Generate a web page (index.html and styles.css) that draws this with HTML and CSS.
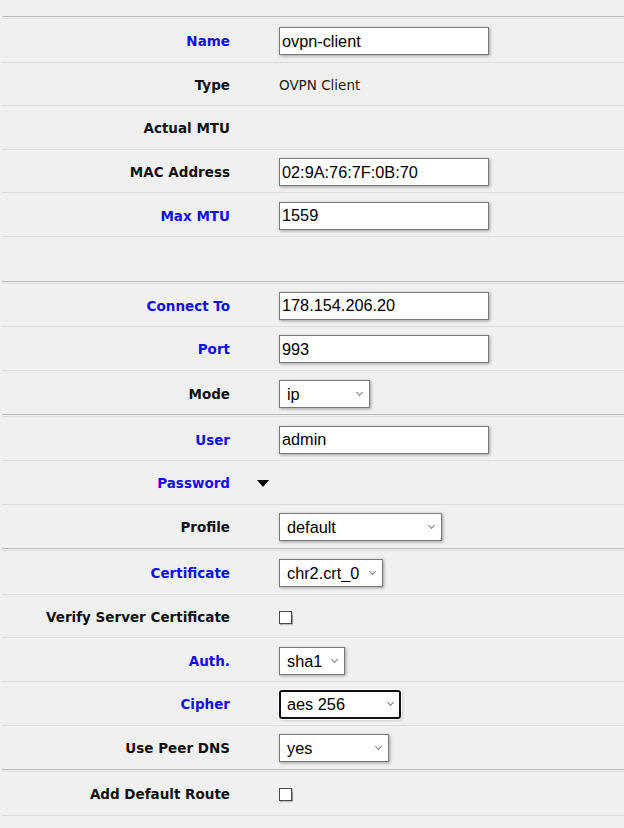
FILE: index.html
```html
<!DOCTYPE html>
<html>
<head>
<meta charset="utf-8">
<title>OVPN Client</title>
<link rel="stylesheet" href="styles.css">
</head>
<body>
<div class="page">
  <div class="sep"></div>
  <section class="section">
    <div class="row"><label class="lbl blue">Name</label><div class="val"><input class="txt" type="text" value="ovpn-client"></div></div>
    <div class="row"><label class="lbl">Type</label><div class="val plain">OVPN Client</div></div>
    <div class="row"><label class="lbl">Actual MTU</label><div class="val"></div></div>
    <div class="row"><label class="lbl">MAC Address</label><div class="val"><input class="txt" type="text" value="02:9A:76:7F:0B:70"></div></div>
    <div class="row"><label class="lbl blue">Max MTU</label><div class="val"><input class="txt" type="text" value="1559"></div></div>
    <div class="row"></div>
  </section>
  <div class="sep"></div>
  <section class="section">
    <div class="row"><label class="lbl blue">Connect To</label><div class="val"><input class="txt" type="text" value="178.154.206.20"></div></div>
    <div class="row"><label class="lbl blue">Port</label><div class="val"><input class="txt" type="text" value="993"></div></div>
    <div class="row"><label class="lbl">Mode</label><div class="val"><span class="sel w-mode"><select><option>ip</option></select></span></div></div>
  </section>
  <div class="sep"></div>
  <section class="section">
    <div class="row"><label class="lbl blue">User</label><div class="val"><input class="txt" type="text" value="admin"></div></div>
    <div class="row"><label class="lbl blue">Password</label><span class="toggle"></span></div>
    <div class="row"><label class="lbl">Profile</label><div class="val"><span class="sel w-profile"><select><option>default</option></select></span></div></div>
  </section>
  <div class="sep"></div>
  <section class="section">
    <div class="row"><label class="lbl blue">Certificate</label><div class="val"><span class="sel w-cert"><select><option>chr2.crt_0</option></select></span></div></div>
    <div class="row"><label class="lbl">Verify Server Certificate</label><div class="val"><span class="chk"></span></div></div>
    <div class="row"><label class="lbl blue">Auth.</label><div class="val"><span class="sel w-auth"><select><option>sha1</option></select></span></div></div>
    <div class="row"><label class="lbl blue">Cipher</label><div class="val"><span class="sel w-cipher focus"><select><option>aes 256</option></select></span></div></div>
    <div class="row"><label class="lbl">Use Peer DNS</label><div class="val"><span class="sel w-dns"><select><option>yes</option></select></span></div></div>
  </section>
  <div class="sep"></div>
  <section class="section open">
    <div class="row"><label class="lbl">Add Default Route</label><div class="val"><span class="chk"></span></div></div>
  </section>
</div>
</body>
</html>
```

FILE: styles.css
```css
html, body {
  margin: 0;
  padding: 0;
  background: #f0f0f0;
}

.page {
  padding: 16px 0 0 2px;
  font-family: "DejaVu Sans", Verdana, sans-serif;
  color: #111;
}

.sep {
  height: 1px;
  border-top: 1px solid #b9b9b9;
  border-bottom: 1px solid #dedede;
}

.row {
  display: grid;
  grid-template-columns: 228px 49px 1fr;
  align-items: center;
  height: 43.6px;
  padding-top: 2px;
  box-sizing: border-box;
  border-bottom: 1px solid #dcdcdc;
}

.section .row:last-child {
  border-bottom: none;
}

.section.open .row:last-child {
  border-bottom: 1px solid #dcdcdc;
}

.lbl {
  grid-column: 1;
  text-align: right;
  font-weight: bold;
  font-size: 13.5px;
  color: #111;
  white-space: nowrap;
}

.lbl.blue {
  color: #0f0fe8;
}

.val {
  grid-column: 3;
  display: flex;
  align-items: center;
}

.val.plain {
  font-size: 13.5px;
  color: #1a1a1a;
}

.txt {
  box-sizing: border-box;
  width: 210px;
  height: 28px;
  margin: 0;
  padding: 0 2px;
  border: 1px solid #7a7a7a;
  background: #fff;
  font-family: "Liberation Sans", Arial, sans-serif;
  font-size: 16.3px;
  color: #000;
  box-shadow: 1px 1px 3px rgba(0, 0, 0, 0.35);
  outline: none;
}

.sel {
  position: relative;
  display: inline-block;
  height: 28px;
}

.sel select {
  -webkit-appearance: none;
  appearance: none;
  box-sizing: border-box;
  width: 100%;
  height: 28px;
  margin: 0;
  padding: 0 20px 0 7px;
  border: 1px solid #7a7a7a;
  border-radius: 0;
  background: #fff;
  font-family: "Liberation Sans", Arial, sans-serif;
  font-size: 16.3px;
  color: #000;
  box-shadow: 1px 1px 3px rgba(0, 0, 0, 0.35);
  outline: none;
}

.sel::after {
  content: "";
  position: absolute;
  right: 8px;
  top: 10px;
  width: 4px;
  height: 4px;
  border-right: 1.4px solid #7c7c7c;
  border-bottom: 1.4px solid #7c7c7c;
  transform: rotate(45deg);
  pointer-events: none;
}

.sel.focus {
  height: 29px;
}

.sel.focus select {
  height: 29px;
  border: 2px solid #111;
  border-radius: 3px;
  padding-left: 6px;
  box-shadow: 0 0 0 1px #fff, 1px 1px 3px rgba(0, 0, 0, 0.3);
}

.w-mode { width: 91px; }
.w-profile { width: 163px; }
.w-cert { width: 104px; }
.w-auth { width: 66px; }
.w-cipher { width: 122px; }
.w-dns { width: 110px; }

.toggle {
  grid-column: 2;
  justify-self: start;
  margin-left: 27px;
  width: 0;
  height: 0;
  border-left: 6px solid transparent;
  border-right: 6px solid transparent;
  border-top: 7px solid #000;
}

.chk {
  display: inline-block;
  box-sizing: border-box;
  width: 13px;
  height: 13px;
  border: 1px solid #4a4a4a;
  background: #fff;
  box-shadow: 0.5px 1px 1px rgba(0, 0, 0, 0.4);
}
```
